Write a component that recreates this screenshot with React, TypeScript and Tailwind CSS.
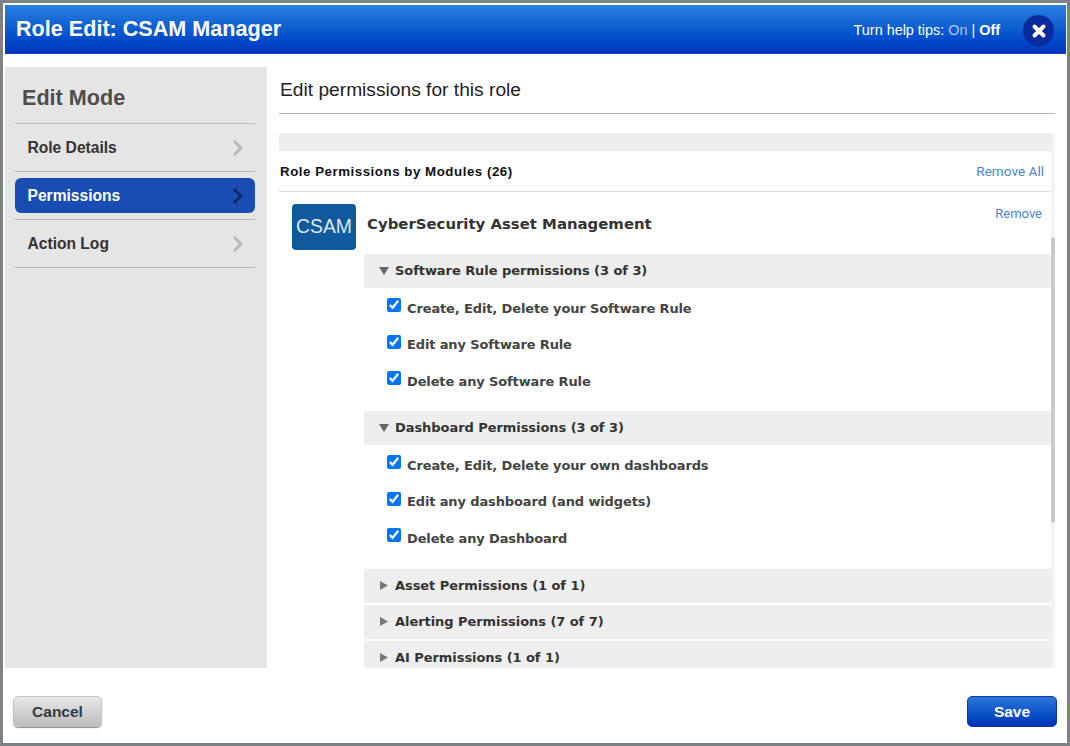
const arial = "font-['Liberation_Sans',Arial,sans-serif]";
const verdana = "font-['DejaVu_Sans',Verdana,sans-serif]";

const navItems = [
  { label: 'Role Details', active: false },
  { label: 'Permissions', active: true },
  { label: 'Action Log', active: false }
];

const softwareRules = [
  'Create, Edit, Delete your Software Rule',
  'Edit any Software Rule',
  'Delete any Software Rule'
];

const dashboardRules = [
  'Create, Edit, Delete your own dashboards',
  'Edit any dashboard (and widgets)',
  'Delete any Dashboard'
];

function GroupHeader({ title, open }: { title: string; open?: boolean }) {
  return (
    <div className="flex items-center bg-[#eeeeee] shrink-0 pl-[15px] h-[34px]">
      <span className="w-[16px] flex items-center">
        {open ? (
          <svg width="10" height="8" viewBox="0 0 10 8"><path d="M0 0h10L5 8z" fill="#666666" /></svg>
        ) : (
          <svg width="8" height="9" viewBox="0 0 8 9" className="ml-px -mt-[2px]"><path d="M0 0l8 4.5L0 9z" fill="#777777" /></svg>
        )}
      </span>
      <span className={`${verdana} text-[13px] tracking-[-0.06px] font-bold text-[#333333]`}>{title}</span>
    </div>
  );
}

function RuleList({ rules }: { rules: string[] }) {
  return (
    <div className="flex flex-col pl-[23px] pt-[2px]">
      {rules.map((rule) => (
        <label key={rule} className="flex items-center h-[36.5px] gap-[6px]">
          <input type="checkbox" defaultChecked className="w-[14px] h-[14px] accent-[#0075ff] m-0 mb-[6px]" />
          <span className={`${verdana} text-[13px] tracking-[-0.13px] font-bold text-[#444444]`}>{rule}</span>
        </label>
      ))}
    </div>
  );
}

export default function App() {
  return (
    <div className={`w-[1070px] h-[746px] overflow-hidden bg-white border-[3px] border-[#7e8186] flex flex-col ${arial}`}>
      <div className="h-[49px] shrink-0 mt-[2px] ml-[2px] mr-[1px] bg-gradient-to-b from-[#2a7fdf] to-[#0033c0] flex items-center justify-between pl-[11px] pr-[12px] pt-[3px] border-b border-[#0a3fc0]">
        <h1 className="text-[21.6px] font-bold text-white -mt-[2px]">Role Edit: CSAM Manager</h1>
        <div className="flex items-center gap-[23px]">
          <div className="text-[14.4px] text-white">
            Turn help tips: <span className="text-[#b4c4dc]">On</span> | <span className="font-bold">Off</span>
          </div>
          <button className="w-[31px] h-[31px] rounded-full bg-[#0b2a9c] flex items-center justify-center">
            <svg width="16" height="16" viewBox="0 0 16 16">
              <path d="M3.5 3.5l9 9M12.5 3.5l-9 9" stroke="white" strokeWidth="4" strokeLinecap="round" />
            </svg>
          </button>
        </div>
      </div>

      <div className="flex flex-1 min-h-0 ml-[2px] mt-[13px] mr-[12px]">
        <aside className="w-[262px] shrink-0 bg-[#e5e5e5] pl-[10px] pr-[12px]">
          <div className="h-[57px] pl-[7px] pt-[18px] border-b border-[#bdbdbd] text-[21.6px] leading-[26px] font-bold text-[#4d4d4d]">Edit Mode</div>
          {navItems.map((item) => (
            <div key={item.label} className="h-[48px] border-b border-[#b5b5b5] flex items-center">
              <div className={`w-full h-[35px] rounded-[6px] flex items-center justify-between pl-[12.5px] pr-[12px] ${item.active ? 'bg-[#1a4db3] text-white' : 'text-[#333333]'}`}>
                <span className="text-[15.6px] font-bold">{item.label}</span>
                <svg width="11" height="18" viewBox="0 0 11 18">
                  <path d="M2 2l7 7-7 7" fill="none" stroke={item.active ? '#0b2a66' : '#b8b8b8'} strokeWidth="3" />
                </svg>
              </div>
            </div>
          ))}
        </aside>

        <main className="flex-1 min-w-0 pl-[12px] flex flex-col">
          <div className="h-[47px] shrink-0 border-b border-[#b5b5b5] text-[19.2px] text-[#222222] pt-[10px] leading-[26px] pl-px">
            Edit permissions for this role
          </div>

          <div className="flex flex-1 min-h-0 mt-[19px]">
            <div className="flex-1 min-w-0 overflow-hidden">
              <div className="h-[18px] bg-[#eeeeee]" />
              <div className="h-[41px] border-b border-[#dddddd] flex items-center justify-between pl-px pr-[7px]">
                <span className="text-[13.3px] font-bold text-[#111111] tracking-[0.53px] pt-px">Role Permissions by Modules (26)</span>
                <a className="font-['Roboto',sans-serif] text-[13.6px] text-[#4a86d0]">Remove All</a>
              </div>
              <div className="flex pl-[13px] pt-[12px]">
                <div className="w-[64px] h-[46px] rounded-[4px] bg-[#0e5a9c] flex items-center justify-center text-[19.4px] text-[#dce8f2] shrink-0">CSAM</div>
                <div className="flex-1 min-w-0 flex flex-col ml-[8px]">
                  <div className="h-[50px] flex justify-between pr-[9px] pl-[3px]">
                    <span className={`${verdana} text-[14.9px] font-bold text-[#333333] mt-[10px] leading-[20px]`}>CyberSecurity Asset Management</span>
                    <a className="font-['Roboto',sans-serif] text-[13px] text-[#4a86d0]">Remove</a>
                  </div>
                  <GroupHeader title="Software Rule permissions (3 of 3)" open />
                  <RuleList rules={softwareRules} />
                  <div className="h-[11.5px]" />
                  <GroupHeader title="Dashboard Permissions (3 of 3)" open />
                  <RuleList rules={dashboardRules} />
                  <div className="h-[12.5px]" />
                  <GroupHeader title="Asset Permissions (1 of 1)" />
                  <div className="h-[2px] shrink-0" />
                  <GroupHeader title="Alerting Permissions (7 of 7)" />
                  <div className="h-[2px] shrink-0" />
                  <GroupHeader title="AI Permissions (1 of 1)" />
                </div>
              </div>
            </div>
            <div className="w-[4px] shrink-0 bg-[#f3f3f3]">
              <div className="h-[284px] mt-[105px] bg-[#ccc9c6]" />
            </div>
          </div>
        </main>
      </div>

      <div className="h-[75px] shrink-0 flex items-center justify-between pl-[10px] pr-[10px] pt-[12px]">
        <button className="w-[89px] h-[31px] rounded-[5px] border border-[#c4c4c4] bg-gradient-to-b from-[#e8e8e8] to-[#bdbdbd] shadow-[0_1px_1px_#888888] text-[15.5px] font-bold text-[#333a45]">Cancel</button>
        <button className="w-[90px] h-[31px] rounded-[5px] border border-[#0a3aa8] bg-gradient-to-b from-[#2a75d8] to-[#0033b8] text-[15.5px] font-bold text-white">Save</button>
      </div>
    </div>
  );
}
